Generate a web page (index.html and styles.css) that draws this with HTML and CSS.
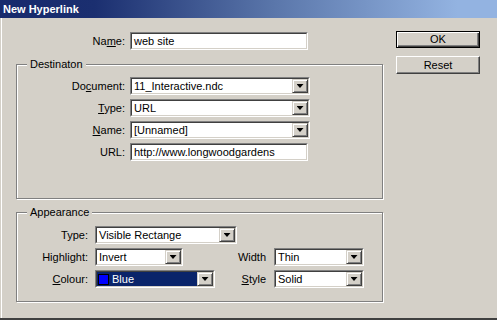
FILE: index.html
```html
<!DOCTYPE html>
<html lang="en">
<head>
    <meta charset="UTF-8">
    <title>New Hyperlink</title>
    <link rel="stylesheet" href="styles.css">
</head>
<body>
<div class="dialog">
    <div class="titlebar">New Hyperlink</div>

    <div class="content">
        <div class="main">
            <!-- Link name -->
            <div class="row top-row">
                <div class="label wide">Na<u>m</u>e:</div>
                <div class="field w178"><div class="field-in"><span class="value">web site</span></div></div>
            </div>

            <!-- Destination -->
            <div class="group dest">
                <span class="legend">Destinaton</span>
                <div class="rows">
                    <div class="row">
                        <div class="label dest-label">Do<u>c</u>ument:</div>
                        <div class="field w180"><div class="field-in"><span class="value">11_Interactive.ndc</span><span class="arrow"></span></div></div>
                    </div>
                    <div class="row">
                        <div class="label dest-label"><u>T</u>ype:</div>
                        <div class="field w180"><div class="field-in"><span class="value">URL</span><span class="arrow"></span></div></div>
                    </div>
                    <div class="row">
                        <div class="label dest-label"><u>N</u>ame:</div>
                        <div class="field w180"><div class="field-in"><span class="value">[Unnamed]</span><span class="arrow"></span></div></div>
                    </div>
                    <div class="row">
                        <div class="label dest-label">URL:</div>
                        <div class="field w178"><div class="field-in"><span class="value">http://www.longwoodgardens</span></div></div>
                    </div>
                </div>
            </div>

            <!-- Appearance -->
            <div class="group appear">
                <span class="legend">Appearance</span>
                <div class="rows">
                    <div class="row">
                        <div class="label app-label">Type:</div>
                        <div class="field w142"><div class="field-in"><span class="value">Visible Rectange</span><span class="arrow"></span></div></div>
                    </div>
                    <div class="row">
                        <div class="label app-label">Highlight:</div>
                        <div class="field w88"><div class="field-in"><span class="value">Invert</span><span class="arrow"></span></div></div>
                        <div class="pair">
                            <div class="label pair-label">Width</div>
                            <div class="field w90"><div class="field-in"><span class="value">Thin</span><span class="arrow"></span></div></div>
                        </div>
                    </div>
                    <div class="row">
                        <div class="label app-label"><u>C</u>olour:</div>
                        <div class="field w120"><div class="field-in"><span class="value selected"><span class="swatch"></span>Blue</span><span class="arrow"></span></div></div>
                        <div class="pair">
                            <div class="label pair-label"><u>S</u>tyle</div>
                            <div class="field w90"><div class="field-in"><span class="value">Solid</span><span class="arrow"></span></div></div>
                        </div>
                    </div>
                </div>
            </div>
        </div>

        <!-- Buttons -->
        <div class="buttons">
            <div class="btn default">OK</div>
            <div class="btn">Reset</div>
        </div>
    </div>
</div>
</body>
</html>
```

FILE: styles.css
```css
/* General */
body {
    margin: 0;
    background: #d4d0c8;
    font-family: 'Liberation Sans', Arial, sans-serif;
    font-size: 11px;
    color: #000;
}

.dialog {
    width: 497px;
    height: 320px;
    box-sizing: border-box;
    border-bottom: 2px solid #404040;
    display: flex;
    flex-direction: column;
    overflow: hidden;
}

/* Title bar */
.titlebar {
    height: 18px;
    line-height: 18px;
    padding-left: 3px;
    color: #fff;
    font-weight: bold;
    background: linear-gradient(to right, #172a6c 0, #1b2f70 19%, #5a76aa 55%, #93b3e1 92%);
}

.content {
    flex: 1;
    display: flex;
    margin-left: 1px;
    border-left: 1px solid #fff;
}

.main {
    width: 367px;
    padding: 14px 0 0 14px;
}

/* Rows and labels */
.row {
    display: flex;
    align-items: center;
    height: 18px;
}

.top-row {
    margin-bottom: 14px;
}

.label {
    box-sizing: border-box;
    text-align: right;
    white-space: nowrap;
}

.label.wide { width: 114px; padding-right: 5px; }
.dest-label { width: 113px; padding-right: 5px; }
.app-label { width: 78px; padding-right: 7px; }

.pair {
    margin-left: auto;
    display: flex;
    align-items: center;
}

.pair-label { width: 44px; padding-right: 8px; }

/* Sunken fields */
.field {
    box-sizing: border-box;
    height: 18px;
    border: 1px solid;
    border-color: #808080 #fff #fff #808080;
}

.field-in {
    height: 14px;
    border: 1px solid;
    border-color: #404040 #d4d0c8 #d4d0c8 #404040;
    background: #fff;
    display: flex;
}

.value {
    flex: 1;
    padding-left: 2px;
    line-height: 14px;
    white-space: nowrap;
    overflow: hidden;
}

.value.selected {
    background: #0a246a;
    color: #fff;
    display: flex;
    align-items: center;
    padding-left: 1px;
}

.swatch {
    width: 9px;
    height: 9px;
    margin-right: 3px;
    background: #0000ff;
    border: 1px solid #000;
}

.w178 { width: 178px; }
.w180 { width: 180px; }
.w142 { width: 142px; }
.w120 { width: 120px; }
.w90 { width: 90px; }
.w88 { width: 88px; }

/* Combo arrow button */
.arrow {
    width: 16px;
    flex: none;
    box-sizing: border-box;
    background: #d4d0c8;
    border: 1px solid;
    border-color: #d4d0c8 #404040 #404040 #d4d0c8;
    box-shadow: inset 1px 1px #fff, inset -1px -1px #808080;
    display: flex;
    align-items: center;
    justify-content: center;
}

.arrow::after {
    content: '';
    width: 7px;
    height: 4px;
    background: #000;
    clip-path: polygon(0 0, 100% 0, 50% 100%);
}

/* Group boxes */
.group {
    position: relative;
    box-sizing: border-box;
    width: 367px;
    border: 1px solid #808080;
    box-shadow: inset 1px 1px #fff, 1px 1px #fff;
}

.group .rows {
    display: flex;
    flex-direction: column;
    gap: 4px;
}

.legend {
    position: absolute;
    top: -7px;
    left: 10px;
    padding: 0 3px;
    line-height: 13px;
    background: #d4d0c8;
}

.dest {
    height: 135px;
    padding-top: 12px;
}

.appear {
    height: 90px;
    margin-top: 13px;
    padding-top: 13px;
}

.appear .row {
    padding-right: 18px;
}

/* Buttons */
.buttons {
    width: 84px;
    margin-left: 13px;
    padding-top: 13px;
    display: flex;
    flex-direction: column;
    gap: 8px;
}

.btn {
    box-sizing: border-box;
    height: 18px;
    line-height: 16px;
    text-align: center;
    border: 1px solid;
    border-color: #fff #404040 #404040 #fff;
    box-shadow: inset -1px -1px #808080;
}

.btn.default {
    height: 17px;
    line-height: 15px;
    border-color: #000;
    box-shadow: inset 1px 1px #fff, inset -1px -1px #404040, inset -2px -2px #808080;
}
```
